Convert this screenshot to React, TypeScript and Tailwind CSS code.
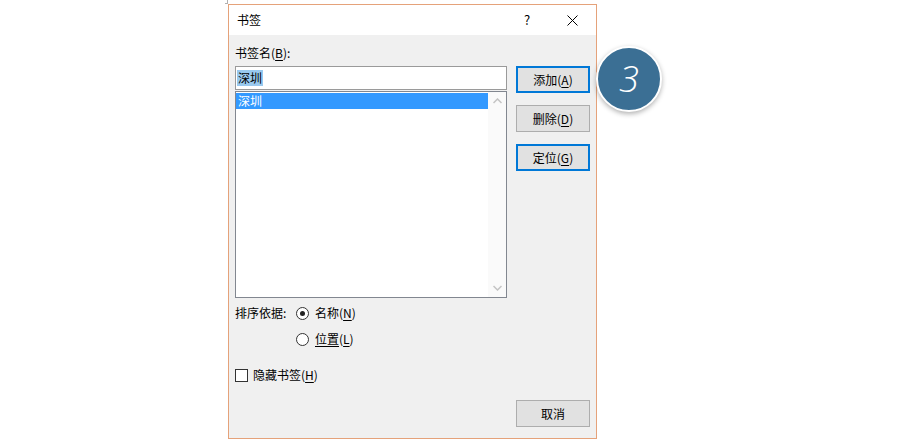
import React from "react";

const font = { fontFamily: '"Noto Sans CJK SC", "Noto Sans", sans-serif' };

function Btn({ children, focused }: { children: React.ReactNode; focused?: boolean }) {
  return (
    <div
      className={
        "h-[27px] w-[74px] flex items-center justify-center bg-[#e1e1e1] text-[12px] text-black " +
        (focused ? "border-2 border-[#0078d7]" : "border border-[#adadad]")
      }
    >
      {children}
    </div>
  );
}

function U({ c }: { c: string }) {
  return <span className="underline underline-offset-2">{c}</span>;
}

export default function App() {
  return (
    <div className="relative w-[900px] h-[446px] bg-white overflow-hidden text-black" style={font}>
      <div className="absolute left-[225px] top-0 w-[3px] h-[4px] border-r border-b border-[#b0b0b0]" />
      <div className="ml-[228px] mt-[4px] w-[369px] h-[435px] border border-[#e5a27a] flex flex-col bg-[#f0f0f0]">
        <div className="h-[30px] bg-white flex items-center pl-[8px] text-[12px]">
          <span className="flex-1">书签</span>
          <span className="w-[10px] text-center text-[13px] mr-[35px]">?</span>
          <svg width="11" height="11" viewBox="0 0 11 11" className="mr-[18px]">
            <path d="M0.5 0.5 L10.5 10.5 M10.5 0.5 L0.5 10.5" stroke="#000" strokeWidth="1" />
          </svg>
        </div>
        <div className="flex-1 flex pl-[6px] pr-[5px] text-[12px]">
          <div className="w-[272px] flex flex-col pt-[10px]">
            <div className="h-[16px] leading-[16px]">
              书签名(<U c="B" />):
            </div>
            <div className="mt-[5px] h-[24px] bg-white border border-[#9a9a9a] flex items-center pl-[1px]">
              <span className="bg-[#99c9ef] leading-[16px] px-[1px]">深圳</span>
            </div>
            <div className="mt-[1px] h-[207px] bg-white border border-[#828790] flex">
              <div className="flex-1 pt-[1px]">
                <div className="h-[16px] bg-[#3399ff] text-white leading-[16px] pl-[2px]">深圳</div>
              </div>
              <div className="w-[18px] bg-[#fafafa] flex flex-col items-center justify-between py-[6px]">
                <svg width="9" height="6" viewBox="0 0 9 6">
                  <path d="M0.5 5 L4.5 1 L8.5 5" stroke="#c4c4c4" strokeWidth="1.5" fill="none" />
                </svg>
                <svg width="9" height="6" viewBox="0 0 9 6">
                  <path d="M0.5 1 L4.5 5 L8.5 1" stroke="#c4c4c4" strokeWidth="1.5" fill="none" />
                </svg>
              </div>
            </div>
            <div className="mt-[7px] h-[16px] flex items-center leading-[16px]">
              <span className="w-[61px]">排序依据:</span>
              <span className="w-[13px] h-[13px] rounded-full border border-[#333] bg-white flex items-center justify-center">
                <span className="w-[5px] h-[5px] rounded-full bg-[#222]" />
              </span>
              <span className="ml-[6px]">
                名称(<U c="N" />)
              </span>
            </div>
            <div className="mt-[10px] h-[16px] flex items-center leading-[16px] pl-[61px]">
              <span className="w-[13px] h-[13px] rounded-full border border-[#333] bg-white" />
              <span className="ml-[6px]">
                <span className="underline underline-offset-2">位置</span>(<U c="L" />)
              </span>
            </div>
            <div className="mt-[20px] h-[16px] flex items-center leading-[16px]">
              <span className="w-[13px] h-[13px] border border-[#333] bg-white" />
              <span className="ml-[5px]">
                隐藏书签(<U c="H" />)
              </span>
            </div>
          </div>
          <div className="ml-[9px] w-[74px] flex flex-col pt-[31px] pb-[11px]">
            <Btn focused>
              添加(<U c="A" />)
            </Btn>
            <div className="mt-[12px]">
              <Btn>
                删除(<U c="D" />)
              </Btn>
            </div>
            <div className="mt-[12px]">
              <Btn focused>
                定位(<U c="G" />)
              </Btn>
            </div>
            <div className="mt-auto">
              <Btn>取消</Btn>
            </div>
          </div>
        </div>
      </div>
      <div className="absolute left-[596px] top-[46px] w-[66px] h-[66px] rounded-full bg-[#3b6f94] border-[2px] border-white shadow-[0_2px_5px_rgba(0,0,0,0.3)] flex items-center justify-center">
        <span className="text-white text-[36px] italic font-light leading-none" style={{ fontFamily: '"Open Sans", sans-serif' }}>
          3
        </span>
      </div>
    </div>
  );
}
